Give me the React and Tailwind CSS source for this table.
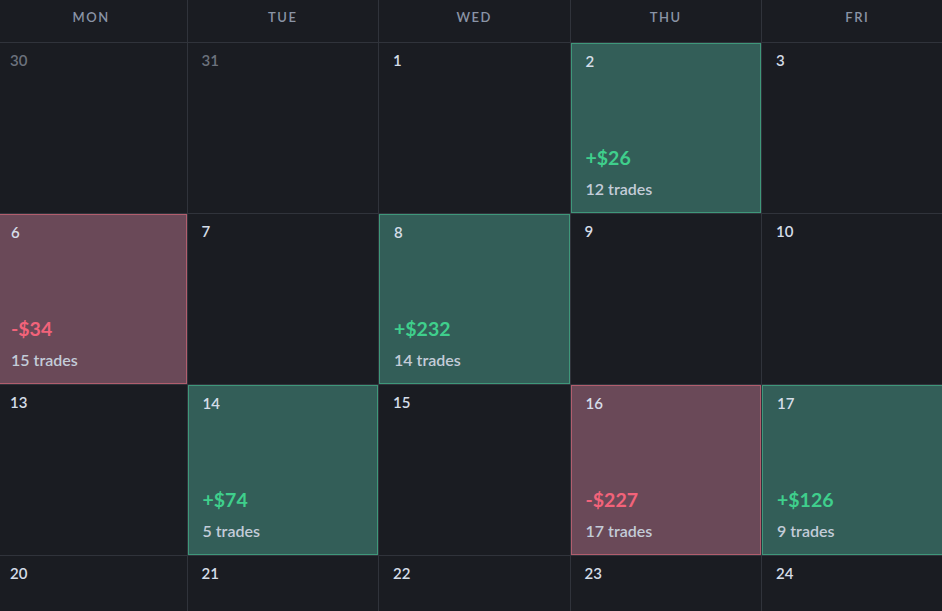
import React from "react";

const days = ["MON", "TUE", "WED", "THU", "FRI"];

const weeks = [
  [
    { d: 30, muted: true },
    { d: 31, muted: true },
    { d: 1 },
    { d: 2, pnl: "+$26", trades: 12 },
    { d: 3 },
  ],
  [
    { d: 6, pnl: "-$34", trades: 15 },
    { d: 7 },
    { d: 8, pnl: "+$232", trades: 14 },
    { d: 9 },
    { d: 10 },
  ],
  [
    { d: 13 },
    { d: 14, pnl: "+$74", trades: 5 },
    { d: 15 },
    { d: 16, pnl: "-$227", trades: 17 },
    { d: 17, pnl: "+$126", trades: 9 },
  ],
  [{ d: 20 }, { d: 21 }, { d: 22 }, { d: 23 }, { d: 24 }],
];

const DayCell = ({ day }) => {
  const loss = day.pnl && day.pnl.startsWith("-");
  const box = day.pnl
    ? loss
      ? "bg-[#6a4958] border border-[#b15e6e]"
      : "bg-[#335e58] border border-[#3f977a]"
    : "";

  return (
    <div className="h-[171px] border-r border-b border-[#30333b]">
      <div className={`h-full flex flex-col px-[14px] pt-[6px] pb-[11px] ${box}`}>
        <span
          className={`text-[15px] font-semibold ${
            day.muted ? "text-[#6c727d]" : "text-[#d5dde8]"
          }`}
        >
          {day.d}
        </span>
        {day.pnl && (
          <div className="mt-auto flex flex-col">
            <span
              className={`text-[19.5px] font-bold leading-6 ${
                loss ? "text-[#f2637a]" : "text-[#3fcf8c]"
              }`}
            >
              {day.pnl}
            </span>
            <span className="mt-[7px] text-[16px] font-semibold text-[#c3ccd8]">
              {day.trades} trades
            </span>
          </div>
        )}
      </div>
    </div>
  );
};

const App = () => {
  return (
    <div
      className="w-[942px] h-[611px] overflow-hidden bg-[#1a1c22]"
      style={{ fontFamily: "Lato, 'Noto Sans', sans-serif" }}
    >
      <div className="ml-[-4px] grid grid-cols-[repeat(5,191.5px)]">
        {days.map((name) => (
          <div
            key={name}
            className="h-[43px] flex items-center justify-center border-r border-b border-[#30333b] text-[13px] font-semibold tracking-[0.12em] text-[#8a94a6] pb-[6px]"
          >
            {name}
          </div>
        ))}
        {weeks.flat().map((day, i) => (
          <DayCell key={i} day={day} />
        ))}
      </div>
    </div>
  );
};

export default App;
